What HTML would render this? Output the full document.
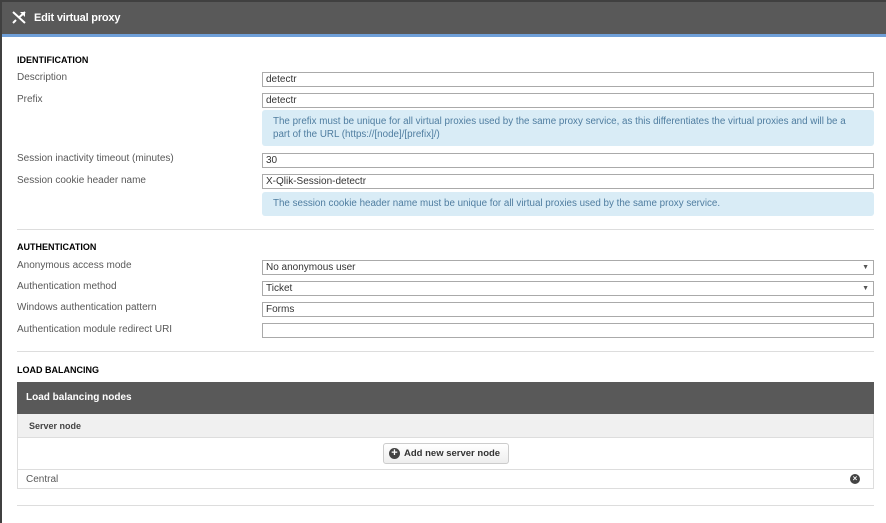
<!DOCTYPE html>
<html><head><style>
*{box-sizing:border-box;margin:0;padding:0}
body{width:886px;height:523px;overflow:hidden;background:#fff;font-family:"Liberation Sans",sans-serif;font-size:10px;color:#595959;position:relative}
.lb{position:absolute;left:0;top:0;width:2px;height:523px;background:#404040}
.hdr{position:absolute;left:0;top:0;width:886px;height:34px;background:#595959;border-top:2px solid #404040}
.hdr span{position:absolute;left:34px;top:10px;color:#fff;font-weight:bold;font-size:11px;letter-spacing:-0.2px}
.blue{position:absolute;left:0;top:34px;width:886px;height:3px;background:#6f9fd8}
.a{position:absolute}
.h{position:absolute;left:17px;font-weight:bold;color:#000;font-size:9px}
.l{position:absolute;left:17px;font-size:10px;color:#595959}
.in{position:absolute;left:262px;width:612px;height:15px;border:1px solid #aaa;font-size:10px;color:#333;padding-left:3px;line-height:13px;background:#fff}
.in i{position:absolute;right:4px;top:0;font-style:normal;font-size:7px;color:#555}
.info{position:absolute;left:262px;width:612px;background:#d9ecf6;border-radius:3px;color:#4f7da0;font-size:9.8px;padding:5px 11px;line-height:13px}
.div{position:absolute;left:17px;width:857px;height:1px;background:#ddd}
</style></head><body>
<div class="hdr"><svg class="a" style="left:12px;top:9px" width="14" height="13" viewBox="0 0 14 13"><path d="M1 1 L13 12 M13 1 L7 6.5 M1 12 L4 9" stroke="#fff" stroke-width="2" fill="none"/><path d="M8 1h5v5z" fill="#fff"/></svg><span>Edit virtual proxy</span></div>
<div class="blue"></div>
<div class="lb"></div>
<div class="h" style="top:55px">IDENTIFICATION</div>
<div class="l" style="top:72px">Description</div><div class="in" style="top:72px">detectr</div>
<div class="l" style="top:94px">Prefix</div><div class="in" style="top:93px">detectr</div>
<div class="info" style="top:110px;height:36px">The prefix must be unique for all virtual proxies used by the same proxy service, as this differentiates the virtual proxies and will be a part of the URL (https://[node]/[prefix]/)</div>
<div class="l" style="top:153px">Session inactivity timeout (minutes)</div><div class="in" style="top:153px">30</div>
<div class="l" style="top:175px">Session cookie header name</div><div class="in" style="top:174px">X-Qlik-Session-detectr</div>
<div class="info" style="top:192px;height:24px">The session cookie header name must be unique for all virtual proxies used by the same proxy service.</div>
<div class="div" style="top:229px"></div>
<div class="h" style="top:242px">AUTHENTICATION</div>
<div class="l" style="top:260px">Anonymous access mode</div><div class="in" style="top:260px">No anonymous user<i>▼</i></div>
<div class="l" style="top:281px">Authentication method</div><div class="in" style="top:281px">Ticket<i>▼</i></div>
<div class="l" style="top:302px">Windows authentication pattern</div><div class="in" style="top:302px">Forms</div>
<div class="l" style="top:324px">Authentication module redirect URI</div><div class="in" style="top:323px"></div>
<div class="div" style="top:351px"></div>
<div class="h" style="top:365px">LOAD BALANCING</div>
<div class="a" style="left:17px;top:382px;width:857px;height:32px;background:#595959;color:#fff;font-weight:bold;font-size:10px;padding:10px 0 0 9px">Load balancing nodes</div>
<div class="a" style="left:17px;top:414px;width:857px;height:75px;border:1px solid #ddd;border-top:none"></div>
<div class="a" style="left:18px;top:414px;width:855px;height:24px;background:#f0f0f0;border-bottom:1px solid #ddd;font-weight:bold;font-size:9px;color:#444;padding:7px 0 0 11px">Server node</div>
<div class="a" style="left:383px;top:443px;width:126px;height:21px;border:1px solid #ccc;border-radius:3px;background:linear-gradient(#fff,#eee);font-weight:bold;font-size:9.5px;color:#333;padding:4px 0 0 20px">Add new server node<span class="a" style="left:5px;top:4px;width:11px;height:11px;border-radius:50%;background:#444;color:#fff;font-size:11px;line-height:11px;text-align:center">+</span></div>
<div class="a" style="left:18px;top:469px;width:855px;height:1px;background:#ddd"></div>
<div class="l" style="left:26px;top:474px">Central</div>
<div class="a" style="left:850px;top:474px;width:10px;height:10px;border-radius:50%;background:#444;color:#fff;font-size:8px;line-height:10px;text-align:center;font-weight:bold">×</div>
<div class="div" style="top:505px"></div>
</body></html>
